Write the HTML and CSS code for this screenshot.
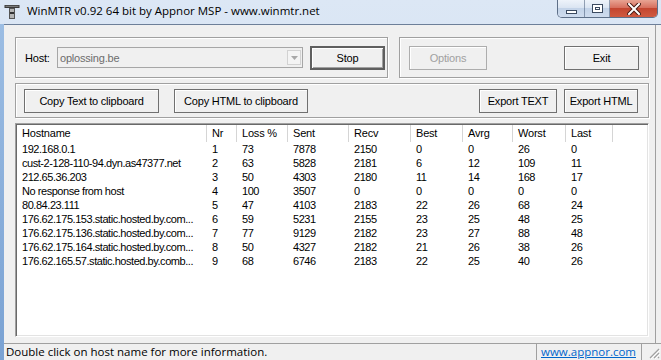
FILE: index.html
```html
<!DOCTYPE html>
<html lang="en">
<head>
    <meta charset="UTF-8">
    <title>WinMTR v0.92 64 bit by Appnor MSP</title>
    <link rel="stylesheet" href="styles.css">
</head>
<body>
    <div class="window">
        <div class="titlebar">
            <svg class="app-icon" width="16" height="16" viewBox="0 0 16 16">
                <rect x="0.5" y="1" width="15" height="3" fill="#3a3a3a"/>
                <rect x="1.5" y="1.8" width="13" height="1" fill="#8a8a8a"/>
                <rect x="5" y="4" width="6" height="11" fill="#555"/>
                <rect x="6" y="5" width="4" height="9" fill="#b5b5b5"/>
                <rect x="6" y="8" width="4" height="2" fill="#333"/>
            </svg>
            <span class="title">WinMTR v0.92 64 bit by Appnor MSP - www.winmtr.net</span>
            <div class="caption-buttons">
                <div class="cap cap-min"><span class="min-glyph"></span></div>
                <div class="cap cap-max"><span class="max-glyph"></span></div>
                <div class="cap cap-close">
                    <svg width="14" height="12" viewBox="0 0 14 12">
                        <path d="M2 1 L12 11 M12 1 L2 11" stroke="#4a1a12" stroke-width="4" stroke-linecap="square"/>
                        <path d="M2 1 L12 11 M12 1 L2 11" stroke="#fff" stroke-width="2" stroke-linecap="square"/>
                    </svg>
                </div>
            </div>
        </div>

        <div class="window-body">
            <div class="frame-left"></div>
            <div class="client">
                <div class="main">
                    <div class="top-row">
                        <div class="group host-group">
                            <span class="host-label">Host:</span>
                            <div class="combo">
                                <span class="combo-text">oplossing.be</span>
                                <span class="combo-btn">
                                    <svg width="7" height="4" viewBox="0 0 7 4"><path d="M0 0 H7 L3.5 4 Z" fill="#a8a8a8"/></svg>
                                </span>
                            </div>
                            <button class="btn btn-default stop-btn">Stop</button>
                        </div>
                        <div class="group options-group">
                            <button class="btn btn-disabled options-btn">Options</button>
                            <button class="btn exit-btn">Exit</button>
                        </div>
                    </div>

                    <div class="group export-group">
                        <button class="btn copy-text-btn">Copy Text to clipboard</button>
                        <button class="btn copy-html-btn">Copy HTML to clipboard</button>
                        <button class="btn export-text-btn">Export TEXT</button>
                        <button class="btn export-html-btn">Export HTML</button>
                    </div>

                    <div class="listview">
                        <div class="lv-head lv-cols">
                            <div>Hostname</div>
                            <div>Nr</div>
                            <div>Loss %</div>
                            <div>Sent</div>
                            <div>Recv</div>
                            <div>Best</div>
                            <div>Avrg</div>
                            <div>Worst</div>
                            <div>Last</div>
                            <div class="lv-fill"></div>
                        </div>
                        <div class="lv-row lv-cols"><div>192.168.0.1</div><div>1</div><div>73</div><div>7878</div><div>2150</div><div>0</div><div>0</div><div>26</div><div>0</div></div>
                        <div class="lv-row lv-cols"><div>cust-2-128-110-94.dyn.as47377.net</div><div>2</div><div>63</div><div>5828</div><div>2181</div><div>6</div><div>12</div><div>109</div><div>11</div></div>
                        <div class="lv-row lv-cols"><div>212.65.36.203</div><div>3</div><div>50</div><div>4303</div><div>2180</div><div>11</div><div>14</div><div>168</div><div>17</div></div>
                        <div class="lv-row lv-cols"><div>No response from host</div><div>4</div><div>100</div><div>3507</div><div>0</div><div>0</div><div>0</div><div>0</div><div>0</div></div>
                        <div class="lv-row lv-cols"><div>80.84.23.111</div><div>5</div><div>47</div><div>4103</div><div>2183</div><div>22</div><div>26</div><div>68</div><div>24</div></div>
                        <div class="lv-row lv-cols"><div>176.62.175.153.static.hosted.by.com...</div><div>6</div><div>59</div><div>5231</div><div>2155</div><div>23</div><div>25</div><div>48</div><div>25</div></div>
                        <div class="lv-row lv-cols"><div>176.62.175.136.static.hosted.by.com...</div><div>7</div><div>77</div><div>9129</div><div>2182</div><div>23</div><div>27</div><div>88</div><div>48</div></div>
                        <div class="lv-row lv-cols"><div>176.62.175.164.static.hosted.by.com...</div><div>8</div><div>50</div><div>4327</div><div>2182</div><div>21</div><div>26</div><div>38</div><div>26</div></div>
                        <div class="lv-row lv-cols"><div>176.62.165.57.static.hosted.by.comb...</div><div>9</div><div>68</div><div>6746</div><div>2183</div><div>22</div><div>25</div><div>40</div><div>26</div></div>
                    </div>
                </div>

                <div class="statusbar">
                    <span class="status-text">Double click on host name for more information.</span>
                    <span class="status-panel"><a href="#">www.appnor.com</a></span>
                    <span class="size-grip">
                        <svg width="12" height="12" viewBox="0 0 12 12">
                            <path d="M11 2 L2 11 M11 6 L6 11 M11 10 L10 11" stroke="#a0a0a0" stroke-width="1.2"/>
                            <path d="M12 3 L3 12 M12 7 L7 12" stroke="#fff" stroke-width="1"/>
                        </svg>
                    </span>
                </div>
            </div>
        </div>
    </div>
</body>
</html>
```

FILE: styles.css
```css
* {
    margin: 0;
    padding: 0;
    box-sizing: border-box;
}

body {
    width: 661px;
    height: 360px;
    overflow: hidden;
    background: #f0f0f0;
    font-family: 'Liberation Sans', Arial, sans-serif;
    font-size: 11px;
    letter-spacing: -0.2px;
    color: #000;
}

.window {
    height: 360px;
    display: flex;
    flex-direction: column;
    background: linear-gradient(180deg, #dce7f5 0%, #c8d9ee 100%);
}

/* title bar */

.titlebar {
    height: 24px;
    flex: none;
    display: flex;
    align-items: flex-start;
    letter-spacing: 0;
}

.app-icon {
    margin: 4px 0 0 4px;
    flex: none;
}

.title {
    font-family: 'Open Sans', sans-serif;
    font-size: 11.5px;
    line-height: 16px;
    margin: 3px 0 0 7px;
    color: #000;
    white-space: nowrap;
}

.caption-buttons {
    margin-left: auto;
    margin-right: 3px;
    display: flex;
    height: 18px;
    border: 1px solid rgba(40, 60, 90, 0.7);
    border-top: none;
    border-radius: 0 0 5px 5px;
    overflow: hidden;
}

.cap {
    height: 100%;
    display: flex;
    align-items: center;
    justify-content: center;
}

.cap-min,
.cap-max {
    background: linear-gradient(180deg, #eef3fa 0%, #dbe5f2 45%, #c3d3e8 50%, #cfdcee 100%);
    border-right: 1px solid rgba(60, 80, 110, 0.5);
}

.cap-min {
    width: 27px;
}

.cap-max {
    width: 25px;
}

.cap-close {
    width: 47px;
    background: linear-gradient(180deg, #e8a493 0%, #d7705e 45%, #c44630 50%, #d05a40 100%);
}

.min-glyph {
    width: 11px;
    height: 4px;
    margin-top: 7px;
    background: #fff;
    border: 1px solid #3b4a60;
}

.max-glyph {
    width: 11px;
    height: 9px;
    background: #fff;
    border: 1px solid #3b4a60;
    box-shadow: inset 0 0 0 2px #fff, inset 0 0 0 3px #3b4a60;
}

/* window body */

.window-body {
    flex: 1;
    display: flex;
}

.frame-left {
    width: 4px;
    flex: none;
    background: linear-gradient(180deg, #9cbde3 0%, #7aa2d3 100%);
}

.client {
    flex: 1;
    display: flex;
    flex-direction: column;
    background: #f0f0f0;
    border-top: 1px solid #6d7f99;
}

.main {
    width: 652px;
    height: 318px;
    padding: 12px 0 0 11px;
    border-right: 1px solid #a0a0a0;
}

/* group boxes */

.group {
    border: 1px solid #a0a0a0;
    box-shadow: inset 1px 1px 0 #fff, 1px 1px 0 #fff;
    display: flex;
    align-items: center;
}

.top-row {
    display: flex;
    gap: 11px;
    height: 41px;
}

.host-group {
    width: 373px;
    padding-left: 9px;
}

.host-label {
    width: 32px;
    flex: none;
}

.combo {
    width: 246px;
    height: 21px;
    flex: none;
    display: flex;
    align-items: center;
    border: 1px solid #a6a6a6;
    background: #f0f0f0;
    padding: 0 1px 0 2px;
    color: #6d6d6d;
}

.combo-text {
    flex: 1;
}

.combo-btn {
    width: 14px;
    height: 15px;
    display: flex;
    align-items: center;
    justify-content: center;
    border: 1px solid #d2d2d2;
    background: #f4f4f4;
}

.options-group {
    width: 250px;
    justify-content: space-between;
    padding: 0 9px;
}

.export-group {
    margin-top: 5px;
    width: 634px;
    height: 35px;
    padding: 0 10px 0 8px;
}

/* buttons */

.btn {
    height: 24px;
    font: inherit;
    letter-spacing: inherit;
    color: #000;
    background: #f0f0f0;
    border: 1px solid #707070;
    box-shadow: inset 1px 1px 0 #fff;
    flex: none;
}

.btn-default {
    border: 2px solid #5f5f5f;
    box-shadow: inset 1px 1px 0 #fff, inset -1px -1px 0 #a0a0a0;
}

.btn-disabled {
    color: #a0a0a0;
    border-color: #adadad;
}

.stop-btn {
    width: 75px;
    margin-left: 7px;
}

.options-btn {
    width: 78px;
}

.exit-btn {
    width: 75px;
}

.copy-text-btn {
    width: 135px;
}

.copy-html-btn {
    width: 134px;
    margin-left: 15px;
}

.export-text-btn {
    width: 78px;
    margin-left: auto;
}

.export-html-btn {
    width: 74px;
    margin-left: 7px;
}

/* list view */

.listview {
    margin-top: 5px;
    width: 634px;
    height: 214px;
    padding: 1px;
    background: #fff;
    border: 1px solid;
    border-color: #a0a0a0 #fff #fff #a0a0a0;
    box-shadow: inset 1px 1px 0 #696969, inset -1px -1px 0 #e3e3e3;
}

.lv-cols {
    display: grid;
    grid-template-columns: 190px 30px 51px 61px 62px 52px 50px 53px 47px 1fr;
}

.lv-cols > div {
    padding-left: 5px;
    white-space: nowrap;
    overflow: hidden;
}

.lv-head {
    height: 17px;
    line-height: 16px;
    background: #fff;
}

.lv-head > div {
    border-right: 1px solid #d5d5d5;
}

.lv-head > .lv-fill {
    border-right: none;
}

.lv-row {
    height: 14px;
    line-height: 14px;
    letter-spacing: -0.45px;
}

/* status bar */

.statusbar {
    flex: 1;
    display: flex;
    align-items: stretch;
    border-top: 1px solid #a0a0a0;
    font-family: 'Open Sans', sans-serif;
    font-size: 11.5px;
    letter-spacing: 0;
}

.status-text {
    padding-left: 2px;
    line-height: 16px;
}

.status-panel {
    margin-left: auto;
    width: 106px;
    border-left: 1px solid #a0a0a0;
    border-right: 1px solid #a0a0a0;
    padding-left: 4px;
    line-height: 16px;
}

.status-panel a {
    color: #0066cc;
}

.size-grip {
    width: 19px;
    display: flex;
    align-items: flex-end;
    justify-content: flex-end;
    padding: 0 1px 1px 0;
}
```
